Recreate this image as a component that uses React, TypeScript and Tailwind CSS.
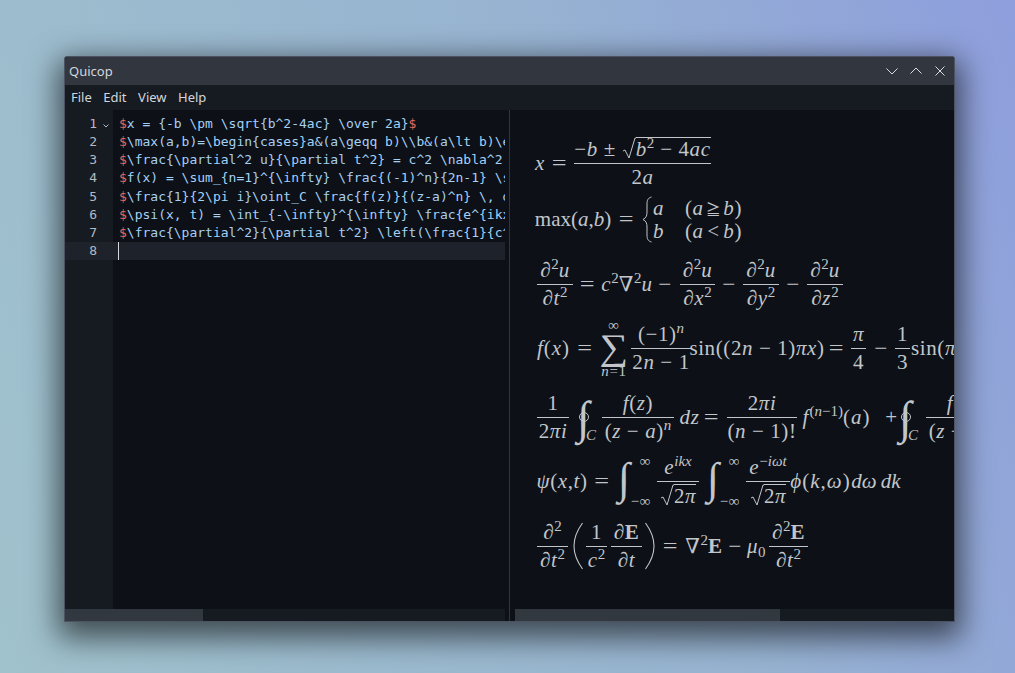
import type { ReactNode } from "react"

const codeLines = [
  "x = {-b \\pm \\sqrt{b^2-4ac} \\over 2a}",
  "\\max(a,b)=\\begin{cases}a&(a\\geqq b)\\\\b&(a\\lt b)\\end{cases}",
  "\\frac{\\partial^2 u}{\\partial t^2} = c^2 \\nabla^2 u - \\frac{\\partial^2 u}{\\partial x^2}",
  "f(x) = \\sum_{n=1}^{\\infty} \\frac{(-1)^n}{2n-1} \\sin((2n-1)\\pi x)",
  "\\frac{1}{2\\pi i}\\oint_C \\frac{f(z)}{(z-a)^n} \\, dz = \\frac{2\\pi i}{(n-1)!}",
  "\\psi(x, t) = \\int_{-\\infty}^{\\infty} \\frac{e^{ikx}}{\\sqrt{2\\pi}} \\int_{-\\infty}",
  "\\frac{\\partial^2}{\\partial t^2} \\left(\\frac{1}{c^2} \\frac{\\partial \\mathbf{E}}{\\partial t}\\right)",
]

const V = ({ children }: { children: ReactNode }) => <i className="italic">{children}</i>

const Sup = ({ children }: { children: ReactNode }) => (
  <sup className="text-[15px] -top-[8px] tracking-normal">{children}</sup>
)

// one run of math text in a box as wide as in the picture
const T = ({ children, className = "" }: { children: ReactNode; className?: string }) => (
  <span className={`shrink-0 flex justify-center leading-[24px] ${className}`}>
    <span>{children}</span>
  </span>
)

const Frac = ({ top, bottom, className = "" }: { top: ReactNode; bottom: ReactNode; className?: string }) => (
  <div className={`shrink-0 grid grid-rows-[1fr_1px_1fr] justify-items-center leading-[22px] ${className}`}>
    <div className="self-end pb-[3px]">{top}</div>
    <div className="w-full bg-[#c2c6cb]" />
    <div className="self-start pt-[2px]">{bottom}</div>
  </div>
)

const Sqrt = ({ children }: { children: ReactNode }) => (
  <span className="inline-flex items-stretch align-bottom">
    <svg width="14" height="23" viewBox="0 0 14 23" className="shrink-0">
      <path d="M1 14l2-1 4 8 6-20h1" fill="none" stroke="#c2c6cb" strokeWidth="1" />
    </svg>
    <span className="border-t border-[#c2c6cb] leading-[22px]">{children}</span>
  </span>
)

const Paren = ({ flip = false, className = "" }: { flip?: boolean; className?: string }) => (
  <svg width="10" height="48" viewBox="0 0 10 48" className={`shrink-0 ${flip ? "-scale-x-100" : ""} ${className}`}>
    <path d="M9.5 1C3 10 1 17 1 24s2 14 8.5 23" fill="none" stroke="#c2c6cb" strokeWidth="1.1" />
  </svg>
)

const Integral = ({ className = "" }: { className?: string }) => (
  <div className={`shrink-0 flex items-center w-[35px] h-[60px] ${className}`}>
    <span className="w-[20px] text-[44px] leading-none italic pb-[4px] pl-[2px]">∫</span>
    <div className="w-[15px] flex flex-col items-end justify-between h-[56px] text-[15px] leading-[16px]">
      <span>∞</span>
      <span>−∞</span>
    </div>
  </div>
)

const Contour = ({ className = "" }: { className?: string }) => (
  <div className={`shrink-0 relative flex items-end w-[18px] h-[48px] ${className}`}>
    <span className="text-[46px] leading-[46px] italic -ml-[1px]">∫</span>
    <i className="absolute left-[8px] -bottom-[2px] text-[15px] leading-[16px]">C</i>
    <span className="absolute left-[1px] top-[19px] w-[10px] h-[10px] rounded-full border border-[#c2c6cb]" />
  </div>
)

const Brace = () => (
  <svg width="10" height="47" viewBox="0 0 10 47" className="shrink-0 ml-[9px]">
    <path
      d="M9.5 1C6 2 5 4 5 8v8c0 4-1 6-4 7.500 3 1.500 4 3.500 4 7.500v8c0 4 1 6 4.500 7"
      fill="none"
      stroke="#c2c6cb"
      strokeWidth="1"
    />
  </svg>
)

const Equations = () => (
  <div className="flex-1 min-h-0 overflow-hidden pl-[25px] pt-[29px] text-[21px] tracking-[0.6px] text-[#c2c6cb] font-['Liberation_Serif','DejaVu_Serif',serif]">
    <div className="flex items-center h-12 whitespace-nowrap">
      <T className="w-[10px]"><V>x</V></T>
      <T className="ml-[8px] w-[13px] scale-x-125">=</T>
      <Frac
        className="ml-[8px] w-[137px]"
        top={
          <span className="inline-flex items-end">
            <span>−<V>b</V> ±&nbsp;</span>
            <Sqrt>
              <V>b</V>
              <Sup>2</Sup> − 4<V>ac</V>
            </Sqrt>
          </span>
        }
        bottom={<span>2<V>a</V></span>}
      />
    </div>

    <div className="flex items-center h-12 whitespace-nowrap mt-[8px]">
      <T className="w-[76px] tracking-normal">max(<V>a</V>,<V>b</V>)</T>
      <T className="ml-[9px] w-[13px] scale-x-125">=</T>
      <Brace />
      <div className="grid grid-cols-[32px_57px] grid-rows-2 leading-[23px] ml-[1px] pt-[2px]">
        <V>a</V>
        <span className="flex justify-between">
          <span>(<V>a</V></span>
          <span className="font-['Noto_Sans_CJK_JP'] text-[15px]">≧</span>
          <span><V>b</V>)</span>
        </span>
        <V>b</V>
        <span className="flex justify-between">
          <span>(<V>a</V></span>
          <span>&lt;</span>
          <span><V>b</V>)</span>
        </span>
      </div>
    </div>

    <div className="flex items-center h-12 whitespace-nowrap mt-[17px] pl-[2px]">
      <Frac className="w-[36px]" top={<span>∂<Sup>2</Sup><V>u</V></span>} bottom={<span>∂<V>t</V><Sup>2</Sup></span>} />
      <T className="ml-[8px] w-[13px] scale-x-125">=</T>
      <T className="ml-[7px] w-[52px]"><V>c</V><Sup>2</Sup>∇<Sup>2</Sup><V>u</V></T>
      <T className="ml-[6px] w-[12px] scale-x-110">−</T>
      <Frac className="ml-[9px] w-[35px]" top={<span>∂<Sup>2</Sup><V>u</V></span>} bottom={<span>∂<V>x</V><Sup>2</Sup></span>} />
      <T className="ml-[8px] w-[12px] scale-x-110">−</T>
      <Frac className="ml-[8px] w-[36px]" top={<span>∂<Sup>2</Sup><V>u</V></span>} bottom={<span>∂<V>y</V><Sup>2</Sup></span>} />
      <T className="ml-[8px] w-[12px] scale-x-110">−</T>
      <Frac className="ml-[8px] w-[36px]" top={<span>∂<Sup>2</Sup><V>u</V></span>} bottom={<span>∂<V>z</V><Sup>2</Sup></span>} />
    </div>

    <div className="flex items-center h-12 whitespace-nowrap mt-[16px]">
      <T className="ml-[1px] w-[35px] tracking-[1px]"><V>f</V>(<V>x</V>)</T>
      <T className="ml-[7px] w-[14px] scale-x-125">=</T>
      <div className="shrink-0 ml-[9px] flex flex-col items-center w-[26px] text-[15px] leading-[12px]">
        <span>∞</span>
        <span className="text-[40px] leading-[32px] scale-y-90">∑</span>
        <span className="pt-[2px]"><V>n</V>=1</span>
      </div>
      <Frac className="ml-[4px] w-[60px]" top={<span>(−1)<Sup><V>n</V></Sup></span>} bottom={<span>2<V>n</V> − 1</span>} />
      <T className="ml-[1px] w-[130px]">sin((2<V>n</V> − 1)<V>πx</V>)</T>
      <T className="ml-[8px] w-[13px] scale-x-125">=</T>
      <Frac className="ml-[8px] w-[15px]" top={<V>π</V>} bottom="4" />
      <T className="ml-[9px] w-[12px] scale-x-110">−</T>
      <Frac className="ml-[8px] w-[15px]" top="1" bottom="3" />
      <T className="ml-[1px]">sin(<V>π</V></T>
    </div>

    <div className="flex items-center h-12 whitespace-nowrap mt-[21px] pl-[2px]">
      <Frac className="w-[32px]" top="1" bottom={<span>2<V>πi</V></span>} />
      <Contour className="ml-[9px]" />
      <Frac className="ml-[6px] w-[72px]" top={<span><V>f</V>(<V>z</V>)</span>} bottom={<span>(<V>z</V> − <V>a</V>)<Sup><V>n</V></Sup></span>} />
      <T className="ml-[6px] w-[19px]"><V>dz</V></T>
      <T className="ml-[6px] w-[13px] scale-x-125">=</T>
      <Frac className="ml-[9px] w-[70px]" top={<span>2<V>πi</V></span>} bottom={<span>(<V>n</V> − 1)!</span>} />
      <T className="ml-[3px] w-[73px] tracking-[1px]"><V>f</V><Sup>(<V>n</V>−1)</Sup>(<V>a</V>)</T>
      <T className="ml-[12px] w-[13px]">+</T>
      <Contour className="ml-[2px]" />
      <Frac className="ml-[8px] w-[72px]" top={<span><V>f</V>(<V>z</V>)</span>} bottom={<span>(<V>z</V> − <V>a</V>)<Sup><V>n</V></Sup></span>} />
    </div>

    <div className="flex items-center h-12 whitespace-nowrap mt-[16px]">
      <T className="w-[54px]"><V>ψ</V>(<V>x</V>,<V>t</V>)</T>
      <T className="ml-[6px] w-[14px] scale-x-125">=</T>
      <Integral className="ml-[7px]" />
      <Frac className="ml-[6px] w-[42px]" top={<span><V>e</V><Sup><V>ikx</V></Sup></span>} bottom={<Sqrt>2<V>π</V></Sqrt>} />
      <Integral className="ml-[6px]" />
      <Frac className="ml-[6px] w-[44px]" top={<span><V>e</V><Sup>−<V>iωt</V></Sup></span>} bottom={<Sqrt>2<V>π</V></Sqrt>} />
      <T className="ml-[3px] w-[55px] tracking-[1px]"><V>ϕ</V>(<V>k</V>,<V>ω</V>)</T>
      <T className="ml-[5px] w-[46px] tracking-normal"><V>dω</V>&thinsp;<V>dk</V></T>
    </div>

    <div className="flex items-center h-12 whitespace-nowrap mt-[17px] pl-[2px]">
      <Frac className="w-[31px]" top={<span>∂<Sup>2</Sup></span>} bottom={<span>∂<V>t</V><Sup>2</Sup></span>} />
      <Paren className="ml-[5px]" />
      <Frac className="ml-[3px] w-[21px]" top="1" bottom={<span><V>c</V><Sup>2</Sup></span>} />
      <Frac className="ml-[4px] w-[31px]" top={<span>∂<b>E</b></span>} bottom={<span>∂<V>t</V></span>} />
      <Paren flip className="ml-[3px]" />
      <T className="ml-[9px] w-[13px] scale-x-125">=</T>
      <T className="ml-[8px] w-[38px]">∇<Sup>2</Sup><b>E</b></T>
      <T className="ml-[6px] w-[12px] scale-x-110">−</T>
      <T className="ml-[6px] w-[19px]"><V>μ</V><sub className="text-[15px]">0</sub></T>
      <Frac className="ml-[3px] w-[39px]" top={<span>∂<Sup>2</Sup><b>E</b></span>} bottom={<span>∂<V>t</V><Sup>2</Sup></span>} />
    </div>
  </div>
)

const App = () => {
  return (
    <div className="w-[1015px] h-[673px] overflow-hidden pl-[64px] pt-[56px] bg-[linear-gradient(70deg,#a0c2cc_0%,#97b3d1_60%,#8e9edd_100%)]">
      <div className="w-[891px] h-[566px] flex flex-col border border-[#4d5363] rounded-t-[3px] overflow-hidden shadow-[0_10px_30px_6px_rgba(0,0,0,0.6)] bg-[#0d1117] font-['Noto_Sans',sans-serif] text-[13px] text-[#d3d7dc]">
        <div className="h-[28px] shrink-0 flex items-center justify-between pl-[4px] pr-[8px] bg-[#31363f]">
          <span className="pt-[1px]">Quicop</span>
          <div className="flex items-center gap-[12px]">
            <svg width="12" height="12" viewBox="0 0 12 12" fill="none" stroke="#d8dbe0" strokeWidth="1">
              <path d="M0.5 3.500L6 9l5.500-5.500" />
            </svg>
            <svg width="12" height="12" viewBox="0 0 12 12" fill="none" stroke="#d8dbe0" strokeWidth="1">
              <path d="M0.5 8.500L6 3l5.500 5.500" />
            </svg>
            <svg width="12" height="12" viewBox="0 0 12 12" fill="none" stroke="#d8dbe0" strokeWidth="1">
              <path d="M1.500 1.500l9 9M10.500 1.500l-9 9" />
            </svg>
          </div>
        </div>

        <div className="h-[25px] shrink-0 flex items-center gap-[11.5px] pl-[6px] bg-[#161b22]">
          <span>File</span>
          <span>Edit</span>
          <span>View</span>
          <span>Help</span>
        </div>

        <div className="flex-1 min-h-0 flex">
          <div className="w-[445px] shrink-0 flex flex-col border-r border-[#30363d]">
            <div className="flex-1 min-h-0 flex pr-[4px] overflow-hidden font-['DejaVu_Sans_Mono',monospace] text-[13px] leading-[18.15px]">
              <div className="w-[48px] shrink-0 pt-[5px] bg-[#161b22] text-[#b4bac2]">
                {[1, 2, 3, 4, 5, 6, 7, 8].map((n) => (
                  <div key={n} className={`relative text-right pr-[16px] ${n === 8 ? "bg-[#1e222b]" : ""}`}>
                    {n}
                    {n === 1 && (
                      <svg width="6" height="4" viewBox="0 0 6 4" className="absolute right-[4px] top-[9px]" fill="none" stroke="#b4bac2">
                        <path d="M0.5 0.5L3 3L5.500 0.5" />
                      </svg>
                    )}
                  </div>
                ))}
              </div>
              <div className="flex-1 min-w-0 pt-[5px] overflow-hidden whitespace-pre text-[#a5d0f5]">
                {codeLines.map((line, i) => (
                  <div key={i} className="pl-[6px]">
                    <span className="text-[#e8685e]">$</span>
                    {line}
                    {i === 0 && <span className="text-[#e8685e]">$</span>}
                  </div>
                ))}
                <div className="h-[18.15px] pl-[5px] bg-[#1e222b]">
                  <div className="w-px h-full bg-[#d3d7dc]" />
                </div>
              </div>
            </div>
            <div className="h-[12px] shrink-0 mr-[4px] bg-[#161b22]">
              <div className="w-[138px] h-full bg-[#31383f]" />
            </div>
          </div>

          <div className="flex-1 min-w-0 flex flex-col">
            <Equations />
            <div className="h-[12px] shrink-0 ml-[5px] bg-[#161b22]">
              <div className="w-[265px] h-full bg-[#31383f]" />
            </div>
          </div>
        </div>
      </div>
    </div>
  )
}

export default App
